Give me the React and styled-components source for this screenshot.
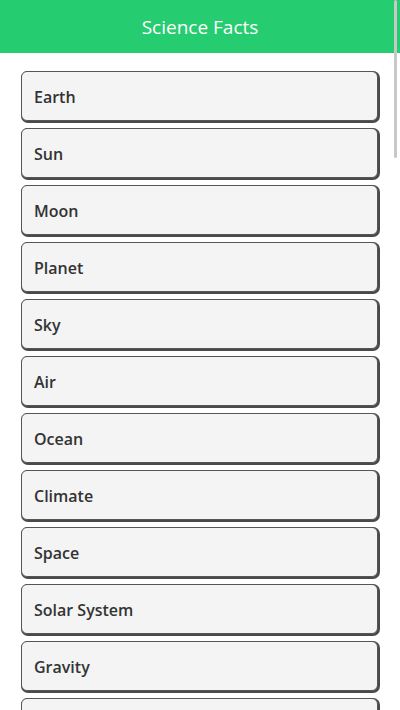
import styled, { createGlobalStyle } from "styled-components";

const topics = [
  "Earth", "Sun", "Moon", "Planet", "Sky", "Air", "Ocean", "Climate",
  "Space", "Solar System", "Gravity", "Light",
];

const GlobalStyle = createGlobalStyle`
  html, body {
    margin: 0;
    padding: 0;
    background: #ffffff;
    font-family: "Open Sans", "Noto Sans", sans-serif;
  }
`;

export default function App() {
  return (
    <Wrapper>
      <GlobalStyle />
      <Header>Science Facts</Header>
      <List>
        {topics.map((t) => (
          <Card key={t}>{t}</Card>
        ))}
      </List>
      <ScrollThumb />
    </Wrapper>
  );
}

const Wrapper = styled.div`
  display: flex;
  flex-direction: column;
  width: 100%;
`;

const Header = styled.header`
  height: 53px;
  background-color: #25cc70;
  color: #ffffff;
  font-size: 19px;
  display: flex;
  align-items: center;
  justify-content: center;
`;

const List = styled.section`
  display: flex;
  flex-direction: column;
  gap: 7px;
  padding: 18px 0 20px 21px;
`;

const Card = styled.div`
  box-sizing: border-box;
  width: 357px;
  height: 50px;
  display: flex;
  align-items: center;
  padding: 2px 12px 0;
  background-color: #f4f4f4;
  border: 1px solid #555555;
  border-radius: 6px;
  box-shadow: 1px 1px 0 1px #4a4a4a;
  color: #333333;
  font-size: 16px;
  font-weight: 600;
`;

/* thin overlay scrollbar thumb, as in the reference */
const ScrollThumb = styled.div`
  position: fixed;
  top: 0;
  right: 3px;
  width: 3px;
  height: 158px;
  border-radius: 2px;
  background: #c8c8c8;
`;
